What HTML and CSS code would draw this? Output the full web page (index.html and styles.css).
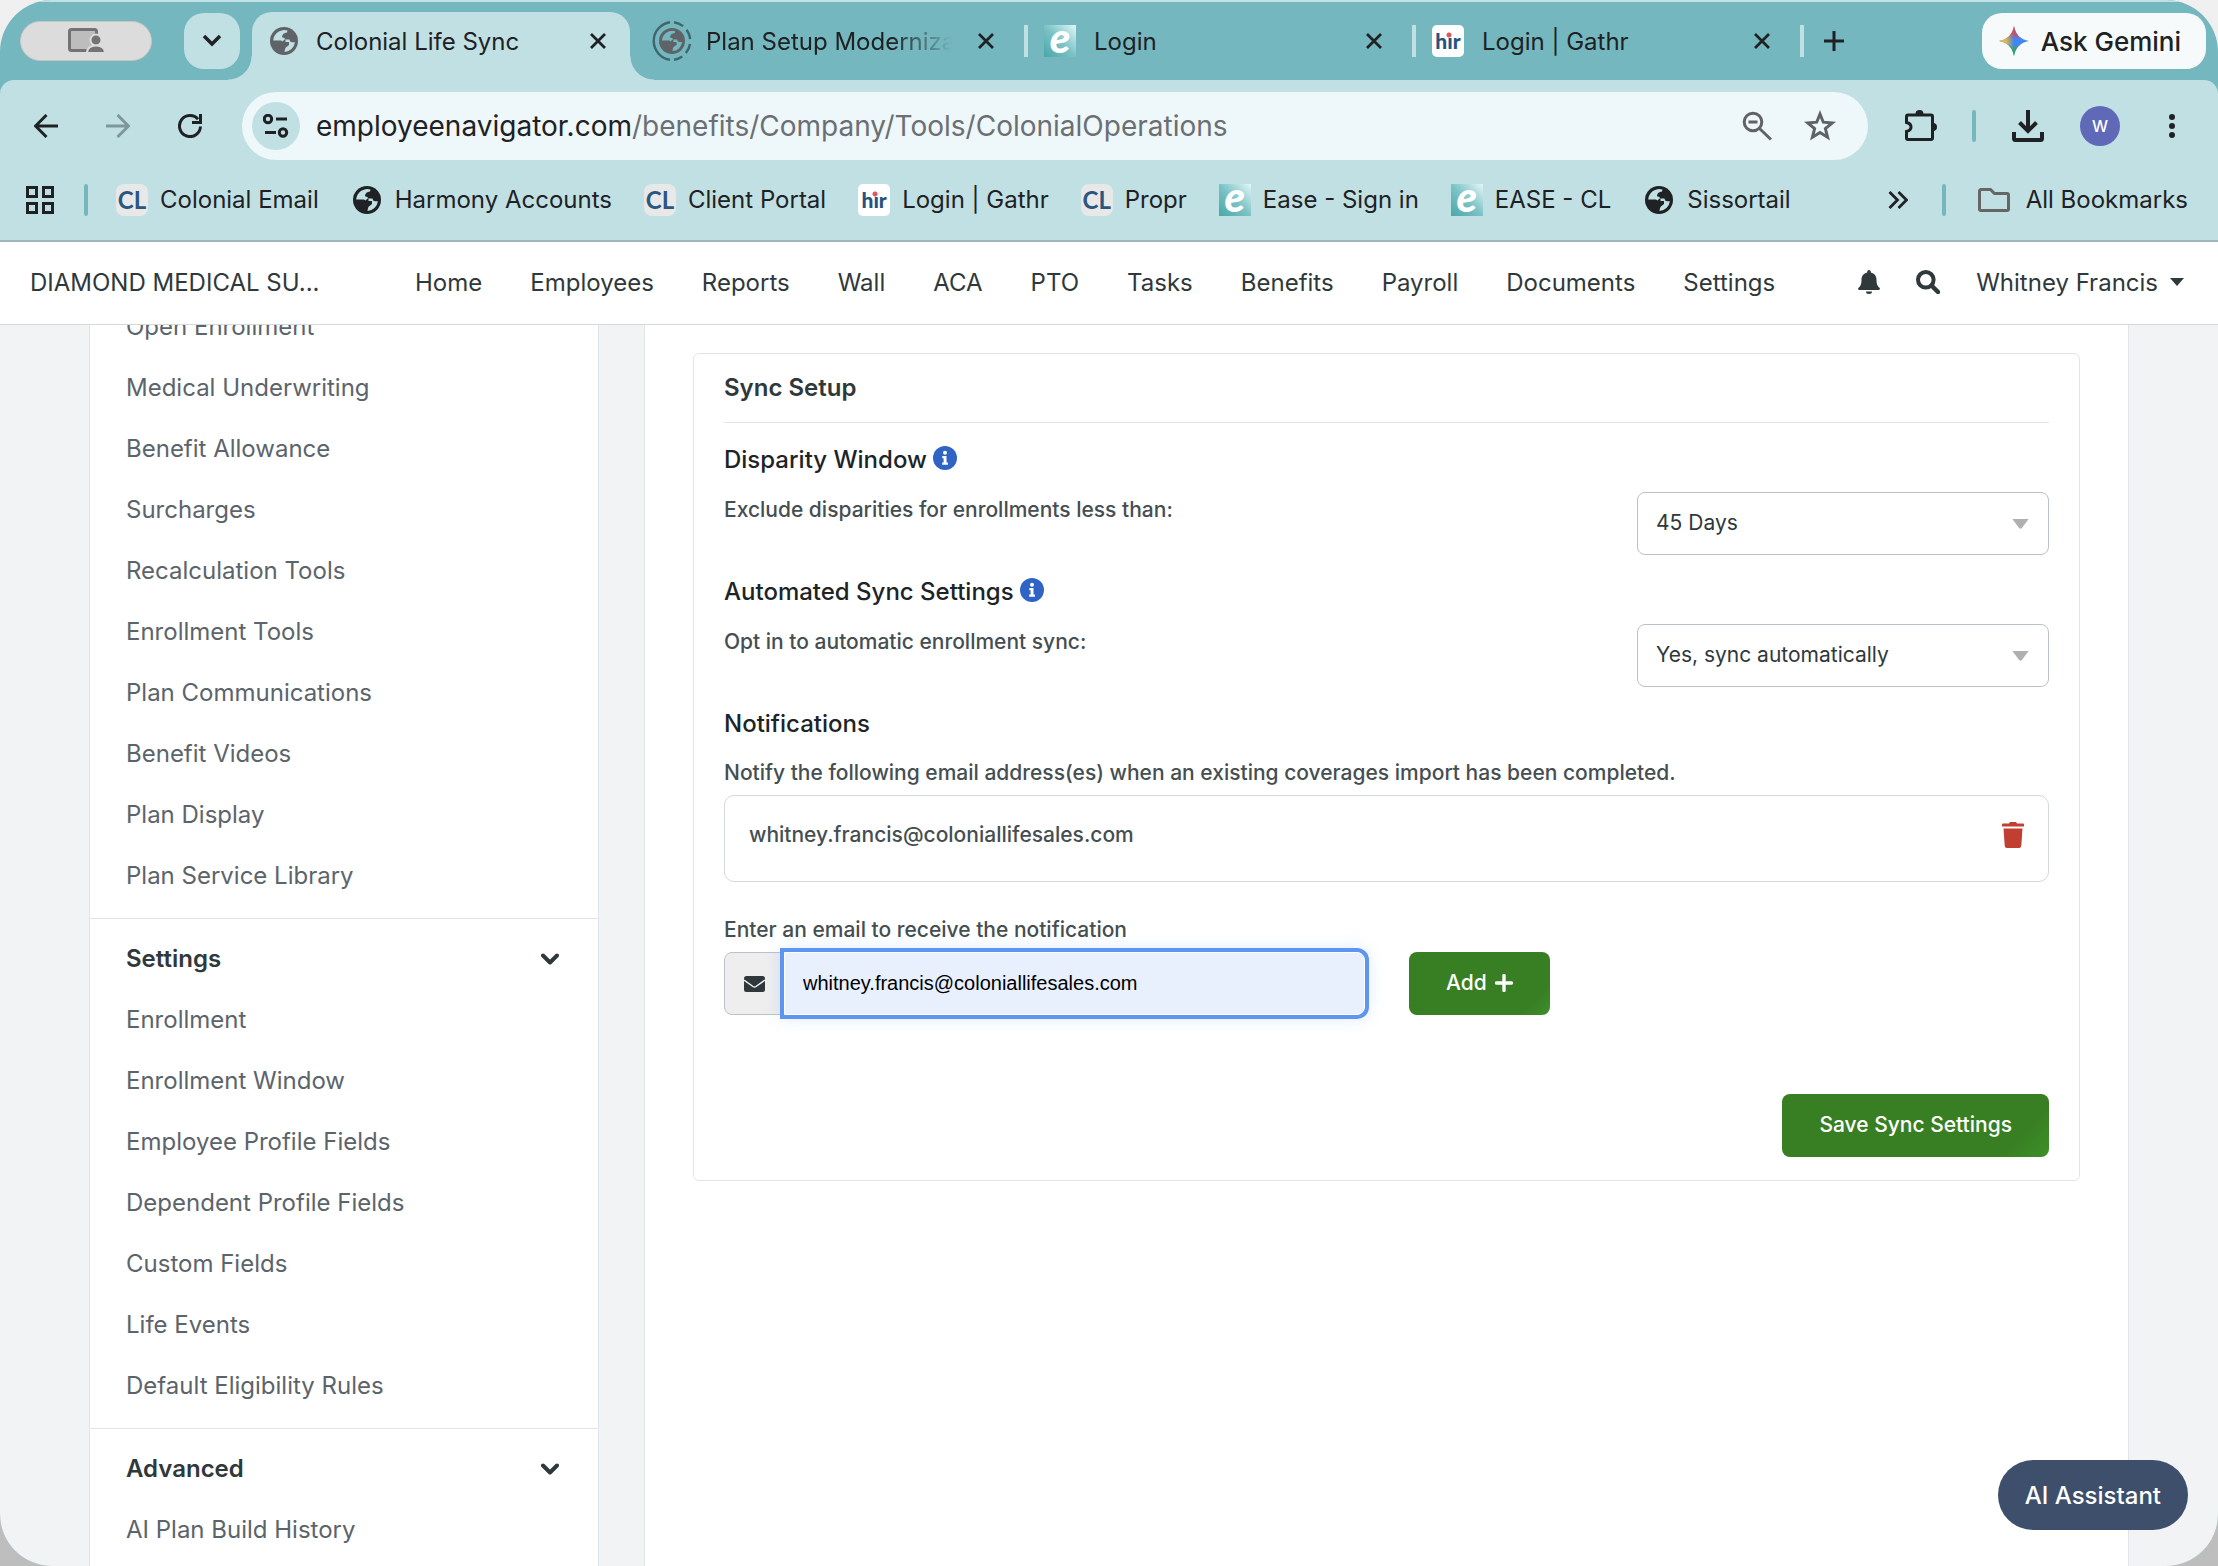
FILE: index.html
```html
<!DOCTYPE html>
<html lang="en">
<head>
    <meta charset="UTF-8">
    <meta name="viewport" content="width=device-width, initial-scale=1.0">
    <title>Colonial Life Sync</title>
    <link rel="stylesheet" href="styles.css">
</head>
<body>
    <svg width="0" height="0" class="sprite" aria-hidden="true">
        <symbol id="globe" viewBox="0 0 28 28">
            <circle cx="14" cy="14" r="14" fill="currentColor"/>
            <path class="sea" d="M3.2 13.5A11 11 0 0 1 17.5 3.6L17 5.5Q12.500 6 12 9.500Q12 11 14 10.800L15.500 12.500V15H19V18L16.500 20Q15 20.500 14.500 24.900A11 11 0 0 0 24.900 15.200H22Q19.500 15 19.500 12.500H14.500L12.500 14.500L11 13.500Z"/>
        </symbol>
        <symbol id="close" viewBox="0 0 16 16">
            <path d="M1 1l14 14M15 1L1 15" fill="none" stroke="currentColor" stroke-width="2.8"/>
        </symbol>
        <symbol id="chevron" viewBox="0 0 18 12">
            <path d="M2 2.500l7 7 7-7" fill="none" stroke="currentColor" stroke-width="4" stroke-linecap="round" stroke-linejoin="round"/>
        </symbol>
        <symbol id="info" viewBox="0 0 24 24">
            <circle cx="12" cy="12" r="12" fill="#2f64c4"/>
            <circle cx="12" cy="6.800" r="2" fill="#fff"/>
            <path d="M9.300 10h4.200v6.500h1.400v2.300H9.200v-2.300h1.400v-4.200H9.300z" fill="#fff"/>
        </symbol>
    </svg>

    <div class="window">
        <!-- Tab strip -->
        <div class="tab-strip">
            <div class="share-pill">
                <svg width="36" height="26" viewBox="0 0 36 26">
                    <rect x="1.500" y="1.500" width="27" height="21" rx="2" fill="#bdbdbd" stroke="#737373" stroke-width="3"/>
                    <circle cx="28" cy="12" r="5.500" fill="#737373" stroke="#dcdcdc" stroke-width="2"/>
                    <path d="M19 25c0-5 4-7.500 9-7.500s9 2.500 9 7.500z" fill="#737373" stroke="#dcdcdc" stroke-width="2"/>
                </svg>
            </div>
            <button class="tab-search" aria-label="Search tabs">
                <svg width="20" height="14" viewBox="0 0 20 14"><path d="M2 2l8 8 8-8" fill="none" stroke="currentColor" stroke-width="3.500"/></svg>
            </button>
            <div class="tabs">
                <div class="tab active">
                    <span class="tab-icon"><svg class="muted" width="28" height="28"><use href="#globe"/></svg></span>
                    <span class="tab-title">Colonial Life Sync</span>
                    <button class="tab-close" aria-label="Close tab"><svg width="16" height="16"><use href="#close"/></svg></button>
                </div>
                <div class="tab loading">
                    <span class="tab-icon">
                        <svg class="muted" width="40" height="40" viewBox="0 0 40 40">
                            <path d="M18 1.200A19 19 0 0 0 18 38.800" fill="none" stroke="#3f666b" stroke-width="2.400"/>
                            <path d="M22 1.200A19 19 0 0 1 22 38.800" fill="none" stroke="#3f666b" stroke-width="2.400" stroke-dasharray="10 5"/>
                            <use href="#globe" x="7" y="7" width="26" height="26"/>
                        </svg>
                    </span>
                    <span class="tab-title fade">Plan Setup Modernization</span>
                    <button class="tab-close" aria-label="Close tab"><svg width="16" height="16"><use href="#close"/></svg></button>
                </div>
                <div class="tab">
                    <span class="tab-icon"><span class="fav ease">e</span></span>
                    <span class="tab-title">Login</span>
                    <button class="tab-close" aria-label="Close tab"><svg width="16" height="16"><use href="#close"/></svg></button>
                </div>
                <div class="tab">
                    <span class="tab-icon"><span class="fav hr">hır</span></span>
                    <span class="tab-title">Login | Gathr</span>
                    <button class="tab-close" aria-label="Close tab"><svg width="16" height="16"><use href="#close"/></svg></button>
                </div>
                <span class="tab-end"></span>
            </div>
            <button class="new-tab" aria-label="New tab">
                <svg width="20" height="20" viewBox="0 0 20 20"><path d="M10 0v20M0 10h20" stroke="currentColor" stroke-width="3"/></svg>
            </button>
            <button class="gemini">
                <svg width="30" height="30" viewBox="0 0 30 30">
                    <defs>
                        <linearGradient id="gemA" x1="0" y1="0" x2="1" y2="0"><stop offset="0" stop-color="#f6c12c"/><stop offset=".25" stop-color="#f6c12c" stop-opacity=".8"/><stop offset=".5" stop-color="#f6c12c" stop-opacity="0"/></linearGradient>
                        <linearGradient id="gemB" x1="0" y1="0" x2="0" y2="1"><stop offset="0" stop-color="#ea4335"/><stop offset=".25" stop-color="#ea4335" stop-opacity=".7"/><stop offset=".45" stop-color="#ea4335" stop-opacity="0"/><stop offset=".6" stop-color="#34a853" stop-opacity="0"/><stop offset=".85" stop-color="#34a853"/></linearGradient>
                    </defs>
                    <path d="M15 0C16.500 8.500 21.500 13.500 30 15C21.500 16.500 16.500 21.500 15 30C13.500 21.500 8.500 16.500 0 15C8.500 13.500 13.500 8.500 15 0Z" fill="#4285f4"/>
                    <path d="M15 0C16.500 8.500 21.500 13.500 30 15C21.500 16.500 16.500 21.500 15 30C13.500 21.500 8.500 16.500 0 15C8.500 13.500 13.500 8.500 15 0Z" fill="url(#gemA)"/>
                    <path d="M15 0C16.500 8.500 21.500 13.500 30 15C21.500 16.500 16.500 21.500 15 30C13.500 21.500 8.500 16.500 0 15C8.500 13.500 13.500 8.500 15 0Z" fill="url(#gemB)"/>
                </svg>
                Ask Gemini
            </button>
        </div>

        <!-- Toolbar -->
        <div class="toolbar-wrap">
            <div class="toolbar">
                <div class="nav-buttons">
                    <button aria-label="Back"><svg width="24" height="24" viewBox="0 0 24 24"><path d="M24 12H2M12.500 1L1.500 12l11 11" fill="none" stroke="currentColor" stroke-width="3"/></svg></button>
                    <button aria-label="Forward" class="disabled"><svg width="24" height="24" viewBox="0 0 24 24"><path d="M0 12h22M11.500 1l11 11-11 11" fill="none" stroke="currentColor" stroke-width="3"/></svg></button>
                    <button aria-label="Reload"><svg width="24" height="24" viewBox="0 0 24 24"><path d="M22.500 12.500A10.500 10.500 0 1 1 20 5.200M22.500 0v8.500H14" fill="none" stroke="currentColor" stroke-width="3"/></svg></button>
                </div>
                <div class="omnibox">
                    <span class="site-info">
                        <svg width="26" height="24" viewBox="0 0 26 24"><g fill="none" stroke="currentColor" stroke-width="3"><circle cx="5" cy="5" r="3.700"/><path d="M13 5h11M2 18.500h11"/><circle cx="20" cy="18.500" r="3.700"/></g></svg>
                    </span>
                    <span class="url">employeenavigator.com<span class="path">/benefits/Company/Tools/ColonialOperations</span></span>
                    <button aria-label="Zoom"><svg width="30" height="30" viewBox="0 0 30 30"><g fill="none" stroke="currentColor" stroke-width="3"><circle cx="11" cy="11" r="8.800"/><path d="M17.500 17.500L29 28.500M6.500 11h9"/></g></svg></button>
                    <button aria-label="Bookmark this tab"><svg width="32" height="32" viewBox="0 0 32 32"><path d="M16 4l3.300 8.200 9 .7-6.900 5.700 2.200 8.700L16 22.500l-7.600 4.800 2.200-8.700-6.900-5.700 9-.7z" fill="none" stroke="currentColor" stroke-width="3"/></svg></button>
                </div>
                <button class="ext" aria-label="Extensions">
                    <svg width="34" height="34" viewBox="0 0 34 34"><path d="M4 6h23a1.500 1.500 0 0 1 1.500 1.500V29a1.500 1.500 0 0 1-1.500 1.500H4A1.500 1.500 0 0 1 2.500 29v-6.500q4.500-1 4.500-4.500t-4.500-4.500v-6A1.500 1.500 0 0 1 4 6z" fill="none" stroke="currentColor" stroke-width="3"/><path d="M11.500 5a4 4 0 0 1 8 0zM29 14a4 4 0 0 1 0 8z" fill="currentColor"/></svg>
                </button>
                <span class="divider"></span>
                <button class="download" aria-label="Downloads">
                    <svg width="32" height="32" viewBox="0 0 32 32"><path d="M16 0v20M7.500 12.500l8.500 8.500 8.500-8.500M2 22v6.500a1.500 1.500 0 0 0 1.500 1.500h25a1.500 1.500 0 0 0 1.500-1.500V22" fill="none" stroke="currentColor" stroke-width="4"/></svg>
                </button>
                <span class="avatar">W</span>
                <button class="more" aria-label="Menu">
                    <svg width="6" height="24" viewBox="0 0 6 24"><g fill="currentColor"><circle cx="3" cy="3" r="3"/><circle cx="3" cy="12" r="3"/><circle cx="3" cy="21" r="3"/></g></svg>
                </button>
            </div>

            <!-- Bookmarks -->
            <div class="bookmarks">
                <button class="apps" aria-label="Apps">
                    <svg width="28" height="28" viewBox="0 0 28 28"><g fill="none" stroke="currentColor" stroke-width="3"><path d="M1.500 1.500h9v9h-9zM17.500 1.500h9v9h-9zM1.500 17.500h9v9h-9zM17.500 17.500h9v9h-9z"/></g></svg>
                </button>
                <span class="divider"></span>
                <div class="bookmark-list">
                    <a href="#"><span class="fav cl">CL</span>Colonial Email</a>
                    <a href="#"><span class="fav"><svg width="28" height="28"><use href="#globe"/></svg></span>Harmony Accounts</a>
                    <a href="#"><span class="fav cl">CL</span>Client Portal</a>
                    <a href="#"><span class="fav hr">hır</span>Login | Gathr</a>
                    <a href="#"><span class="fav cl">CL</span>Propr</a>
                    <a href="#"><span class="fav ease">e</span>Ease - Sign in</a>
                    <a href="#"><span class="fav ease">e</span>EASE - CL</a>
                    <a href="#"><span class="fav"><svg width="28" height="28"><use href="#globe"/></svg></span>Sissortail</a>
                </div>
                <button class="overflow" aria-label="More bookmarks">
                    <svg width="20" height="18" viewBox="0 0 20 18"><path d="M1.500 1l8 8-8 8M10.500 1l8 8-8 8" fill="none" stroke="currentColor" stroke-width="2.800"/></svg>
                </button>
                <span class="divider"></span>
                <a href="#" class="all-bookmarks">
                    <svg width="32" height="24" viewBox="0 0 32 24"><path d="M3 1.500h9.500l4 4H29a1.500 1.500 0 0 1 1.500 1.500v14a1.500 1.500 0 0 1-1.500 1.500H3A1.500 1.500 0 0 1 1.500 21V3A1.500 1.500 0 0 1 3 1.500z" fill="none" stroke="#666" stroke-width="3"/></svg>
                    All Bookmarks
                </a>
            </div>
        </div>

        <!-- Site header -->
        <header class="site-header">
            <a href="#" class="company">DIAMOND MEDICAL SU...</a>
            <nav class="main-nav">
                <a href="#">Home</a>
                <a href="#">Employees</a>
                <a href="#">Reports</a>
                <a href="#">Wall</a>
                <a href="#">ACA</a>
                <a href="#">PTO</a>
                <a href="#">Tasks</a>
                <a href="#">Benefits</a>
                <a href="#">Payroll</a>
                <a href="#">Documents</a>
                <a href="#">Settings</a>
            </nav>
            <div class="header-tools">
                <button aria-label="Notifications"><svg width="22" height="24" viewBox="0 0 22 24"><path d="M11 0a1.800 1.800 0 0 1 1.800 1.800v.6C16.500 3.300 18.500 6 18.500 9.500c0 5 1 6.500 3 8.300.8.800.4 2.200-.8 2.200H1.300C.1 20-.3 18.600.5 17.800c2-1.800 3-3.300 3-8.300C3.500 6 5.500 3.300 9.200 2.400v-.6A1.800 1.800 0 0 1 11 0zM8 21.500h6a3 2.500 0 0 1-6 0z" fill="currentColor"/></svg></button>
                <button aria-label="Search"><svg width="24" height="24" viewBox="0 0 24 24"><circle cx="9.800" cy="9.800" r="7.800" fill="none" stroke="currentColor" stroke-width="4"/><path d="M15.500 15.500l6.500 6.500" stroke="currentColor" stroke-width="4.500" stroke-linecap="round"/></svg></button>
                <button class="user">Whitney Francis <svg width="14" height="8" viewBox="0 0 14 8"><path d="M0 0h14L7 8z" fill="currentColor"/></svg></button>
            </div>
        </header>

        <!-- Page -->
        <div class="page">
            <aside class="sidebar">
                <section class="group scrolled">
                    <a href="#">Open Enrollment</a>
                    <a href="#">Medical Underwriting</a>
                    <a href="#">Benefit Allowance</a>
                    <a href="#">Surcharges</a>
                    <a href="#">Recalculation Tools</a>
                    <a href="#">Enrollment Tools</a>
                    <a href="#">Plan Communications</a>
                    <a href="#">Benefit Videos</a>
                    <a href="#">Plan Display</a>
                    <a href="#">Plan Service Library</a>
                </section>
                <section class="group">
                    <button class="group-title">Settings <svg width="18" height="12"><use href="#chevron"/></svg></button>
                    <a href="#">Enrollment</a>
                    <a href="#">Enrollment Window</a>
                    <a href="#">Employee Profile Fields</a>
                    <a href="#">Dependent Profile Fields</a>
                    <a href="#">Custom Fields</a>
                    <a href="#">Life Events</a>
                    <a href="#">Default Eligibility Rules</a>
                </section>
                <section class="group">
                    <button class="group-title">Advanced <svg width="18" height="12"><use href="#chevron"/></svg></button>
                    <a href="#">AI Plan Build History</a>
                </section>
            </aside>

            <main class="content">
                <form class="card">
                    <h2>Sync Setup</h2>

                    <h3>Disparity Window <svg width="24" height="24"><use href="#info"/></svg></h3>
                    <div class="setting">
                        <label for="disparity">Exclude disparities for enrollments less than:</label>
                        <div class="select">
                            <select id="disparity"><option>45 Days</option></select>
                            <svg width="17" height="10" viewBox="0 0 18 11"><path d="M0 0h18l-7.500 10q-1.500 1.500-3 0z" fill="#b0b0b0"/></svg>
                        </div>
                    </div>

                    <h3>Automated Sync Settings <svg width="24" height="24"><use href="#info"/></svg></h3>
                    <div class="setting">
                        <label for="autosync">Opt in to automatic enrollment sync:</label>
                        <div class="select">
                            <select id="autosync"><option>Yes, sync automatically</option></select>
                            <svg width="17" height="10" viewBox="0 0 18 11"><path d="M0 0h18l-7.500 10q-1.500 1.500-3 0z" fill="#b0b0b0"/></svg>
                        </div>
                    </div>

                    <h3>Notifications</h3>
                    <p class="text">Notify the following email address(es) when an existing coverages import has been completed.</p>
                    <div class="email-row">
                        <span>whitney.francis@coloniallifesales.com</span>
                        <button type="button" aria-label="Delete">
                            <svg width="22" height="26" viewBox="0 0 22 26"><path d="M0 2.500Q0 1.500 1 1.500h6L8 0h6l1 1.500h6q1 0 1 1v2H0zM1.500 6.500h19l-1.200 17.300q-.2 2.200-2.300 2.200H5q-2.100 0-2.300-2.200z" fill="#c13f31"/></svg>
                        </button>
                    </div>

                    <label class="text" for="email">Enter an email to receive the notification</label>
                    <div class="add-row">
                        <div class="input-group">
                            <span class="addon">
                                <svg width="21" height="16" viewBox="0 0 21 16"><rect width="21" height="16" rx="2.500" fill="#2f383b"/><path d="M0 4l9 6.500q1.500 1 3 0L21 4" fill="none" stroke="#eee" stroke-width="1.500"/></svg>
                            </span>
                            <input id="email" type="text" value="whitney.francis@coloniallifesales.com">
                        </div>
                        <button type="button" class="btn">Add <svg width="18" height="18" viewBox="0 0 18 18"><path d="M9 1.500v15M1.500 9h15" stroke="#fff" stroke-width="3.400" stroke-linecap="round"/></svg></button>
                    </div>

                    <div class="actions">
                        <button type="button" class="btn">Save Sync Settings</button>
                    </div>
                </form>
            </main>
            <button class="assistant">AI Assistant</button>
        </div>
    </div>
</body>
</html>
```
FILE: styles.css
```css
/* General Styles */
* {
    box-sizing: border-box;
}
body {
    margin: 0;
    background: linear-gradient(#f0f0f0, #bdbdbd);
    font-family: Inter, 'Liberation Sans', sans-serif;
    font-size: 24px;
    color: #2f383b;
}
a {
    color: inherit;
    text-decoration: none;
}
button {
    display: flex;
    align-items: center;
    justify-content: center;
    padding: 0;
    border: none;
    background: none;
    font: inherit;
    color: inherit;
    cursor: pointer;
}
svg {
    display: block;
    flex: none;
}
.sprite {
    position: absolute;
}
.window {
    display: flex;
    flex-direction: column;
    height: 100vh;
    overflow: hidden;
    border-radius: 52px;
    background: #74b7bf;
}

/* Tab strip */
.tab-strip {
    display: flex;
    align-items: center;
    height: 80px;
    padding: 0 12px 0 20px;
    border-top: 2px solid #c1e0e3;
    color: #202124;
}
.share-pill {
    display: flex;
    align-items: center;
    justify-content: center;
    width: 132px;
    height: 40px;
    margin-right: 32px;
    border: 1px solid #c6c6c6;
    border-radius: 20px;
    background: #dcdcdc;
}
.tab-search {
    width: 56px;
    height: 56px;
    margin-right: 8px;
    border-radius: 20px;
    background: #c1e0e3;
}
.tabs {
    display: flex;
    align-self: stretch;
}
.tab {
    display: flex;
    align-items: center;
    width: 388px;
    padding: 0 28px 0 16px;
}
.tab-icon {
    display: flex;
    justify-content: center;
    width: 40px;
    margin-right: 14px;
}
.tab-title {
    flex: 1;
    overflow: hidden;
    white-space: nowrap;
}
.tab-title.fade {
    margin-right: 24px;
    -webkit-mask-image: linear-gradient(to right, #000 75%, transparent);
    mask-image: linear-gradient(to right, #000 75%, transparent);
}
.tab-close {
    width: 20px;
    height: 20px;
}
.tab + .tab + .tab,
.tab-end {
    background: linear-gradient(#c1e0e3, #c1e0e3) left center / 4px 32px no-repeat;
}
.tab-end {
    width: 4px;
}
.loading {
    --sea: #74b7bf;
}
.tab.active {
    position: relative;
    width: 378px;
    margin: 10px 6px 0 4px;
    padding: 0 22px 10px 12px;
    border-radius: 20px 20px 0 0;
    background: #c1e0e3;
}
.active .tab-icon {
    margin-right: 12px;
}
/* outward curves at the foot of the active tab */
.tab.active::before,
.tab.active::after {
    content: "";
    position: absolute;
    bottom: 0;
    width: 24px;
    height: 24px;
}
.tab.active::before {
    right: 100%;
    background: radial-gradient(circle at 0 0, transparent 23px, #c1e0e3 24px);
}
.tab.active::after {
    left: 100%;
    background: radial-gradient(circle at 100% 0, transparent 23px, #c1e0e3 24px);
}
.new-tab {
    width: 20px;
    height: 20px;
    margin-left: 20px;
}
.gemini {
    gap: 12px;
    height: 56px;
    margin-left: auto;
    padding: 0 25px 0 17px;
    border-radius: 20px;
    background: #f6fafb;
    font-weight: 500;
    font-size: 26px;
}

/* Icons */
.sea {
    fill: var(--sea, #c1e0e3);
}
.muted {
    color: #5f6368;
}
.fav {
    display: flex;
    align-items: center;
    justify-content: center;
    width: 32px;
    height: 32px;
    line-height: 32px;
}
.fav.cl {
    border-radius: 8px;
    background: #e8e8e8;
    color: #2b5680;
    font-family: Lato, sans-serif;
    font-weight: 700;
    font-size: 24px;
}
.fav.ease {
    padding-bottom: 8px;
    background: linear-gradient(45deg, #4ba6a6, #7cc3c6 50%, #e3f7f8);
    color: #fff;
    font-family: Lato, sans-serif;
    font-style: italic;
    font-weight: 900;
    font-size: 42px;
    line-height: 24px;
}
.fav.hr {
    border-radius: 5px;
    background: radial-gradient(circle at 17px 10px, #e0555c 2px, transparent 3px) #fff;
    color: #27527f;
    font-family: Lato, sans-serif;
    font-weight: 900;
    font-size: 21px;
}

/* Toolbar */
.toolbar-wrap {
    border-bottom: 2px solid #9fb5ba;
    border-radius: 14px 14px 0 0;
    background: #c1e0e3;
    color: #202124;
}
.toolbar {
    display: flex;
    align-items: center;
    height: 92px;
    padding: 0 43px 0 34px;
}
.nav-buttons {
    display: flex;
    gap: 48px;
    margin-right: 40px;
}
.disabled {
    color: #7f979b;
}
.omnibox {
    display: flex;
    flex: 1;
    align-items: center;
    height: 68px;
    padding: 0 32px 0 10px;
    border-radius: 34px;
    background: #eef7f9;
    font-size: 28px;
}
.omnibox button {
    margin-left: 32px;
    color: #5f6368;
}
.site-info {
    display: flex;
    align-items: center;
    justify-content: center;
    width: 48px;
    height: 48px;
    margin-right: 16px;
    border-radius: 50%;
    background: #c1e0e3;
}
.url {
    flex: 1;
    white-space: nowrap;
}
.path {
    color: #6b6f73;
}
.ext {
    margin: 0 34px 0 36px;
}
.divider {
    width: 4px;
    height: 32px;
    border-radius: 2px;
    background: #74b7bf;
}
.download {
    margin: 0 36px;
}
.avatar {
    width: 40px;
    height: 40px;
    border-radius: 50%;
    background: #5f69b8;
    color: #fff;
    font-size: 16px;
    font-weight: 500;
    line-height: 40px;
    text-align: center;
}
.more {
    margin-left: 49px;
}

/* Bookmarks */
.bookmarks {
    display: flex;
    align-items: center;
    height: 68px;
    padding: 0 30px 13px 26px;
    white-space: nowrap;
}
.apps {
    margin-right: 30px;
}
.bookmark-list {
    display: flex;
    flex: 1;
    gap: 32px;
    margin-left: 28px;
}
.bookmark-list a {
    display: flex;
    align-items: center;
    gap: 12px;
}
.overflow {
    margin-right: 34px;
}
.all-bookmarks {
    display: flex;
    align-items: center;
    gap: 16px;
    margin-left: 32px;
}

/* Site header */
.site-header {
    display: flex;
    align-items: center;
    height: 83px;
    padding: 0 34px 2px 30px;
    border-bottom: 1px solid #d3d9de;
    background: #fff;
    white-space: nowrap;
}
.company {
    width: 385px;
}
.main-nav {
    display: flex;
    gap: 48px;
}
.header-tools {
    display: flex;
    align-items: center;
    gap: 36px;
    margin-left: auto;
}
.user {
    gap: 12px;
}

/* Page */
.page {
    position: relative;
    display: flex;
    flex: 1;
    gap: 45px;
    min-height: 0;
    padding: 0 89px;
    background: #f1f3f5;
}
.sidebar {
    flex: none;
    width: 510px;
    overflow: hidden;
    border: solid #e1e5e9;
    border-width: 0 1px;
    background: #fff;
    color: #5c646b;
}
.group {
    padding: 9px 39px 12px 36px;
    border-bottom: 1px solid #e1e5e9;
}
.group.scrolled {
    margin-top: -38px;
}
.group a {
    display: block;
    line-height: 61px;
}
.group-title {
    justify-content: space-between;
    width: 100%;
    color: #2f383b;
    font-weight: 600;
    line-height: 61px;
}
.content {
    flex: 1;
    padding: 28px 48px;
    border: solid #e1e5e9;
    border-width: 0 1px;
    background: #fff;
}

/* Card */
.card {
    padding: 0 30px 23px;
    border: 1px solid #e1e5e9;
    border-radius: 6px;
    font-size: 21px;
}
.card h2 {
    margin: 0 0 18px;
    border-bottom: 1px solid #e1e5e9;
    font-size: 24px;
    font-weight: 600;
    line-height: 68px;
}
.card h3 {
    display: flex;
    gap: 6px;
    margin: 0 0 13px;
    color: #1c2427;
    font-size: 24px;
    font-weight: 500;
    line-height: 38px;
}
.card h3 svg {
    margin-top: 5px;
}
.text,
.setting label {
    color: #454e51;
    font-weight: 500;
    line-height: 34px;
}
.setting {
    display: flex;
    justify-content: space-between;
    margin-bottom: 18px;
}
.setting label {
    line-height: 36px;
}
.select {
    position: relative;
    width: 412px;
}
.select svg {
    position: absolute;
    top: 27px;
    right: 20px;
    pointer-events: none;
}
select {
    appearance: none;
    width: 100%;
    height: 63px;
    padding: 0 18px 2px;
    border: 1px solid #b9c2ca;
    border-radius: 8px;
    background: #fff;
    color: #2f383b;
    font: inherit;
}
p.text {
    margin: 0 0 5px;
}
.email-row {
    display: flex;
    align-items: center;
    justify-content: space-between;
    height: 87px;
    margin-bottom: 31px;
    padding: 0 24px 8px;
    border: 1px solid #d3d9de;
    border-radius: 10px;
    color: #454e51;
    font-weight: 500;
}
.add-row {
    display: flex;
    gap: 44px;
    margin-top: 5px;
}
.input-group {
    display: flex;
    width: 641px;
}
.addon {
    display: flex;
    align-items: center;
    justify-content: center;
    width: 60px;
    border: 1px solid #b9c2ca;
    border-radius: 8px 0 0 8px;
    background: #eee;
}
.input-group input {
    flex: 1;
    min-width: 0;
    height: 63px;
    padding: 0 18px;
    border: 1px solid #fff;
    border-radius: 0 8px 8px 0;
    outline: none;
    background: #e8effd;
    box-shadow: 0 0 0 4px #5e95f0, 0 0 16px 4px rgba(94, 149, 240, 0.2);
    color: #000;
    font-family: 'Liberation Sans', Arial, sans-serif;
    font-size: 20px;
}
.btn {
    gap: 8px;
    height: 63px;
    padding: 0 37px 2px;
    border-radius: 8px;
    background: linear-gradient(135deg, #387f24 85%, #3e8f29);
    color: #fff;
    font-weight: 500;
}
.actions {
    display: flex;
    justify-content: flex-end;
    margin-top: 79px;
}
.assistant {
    position: absolute;
    right: 30px;
    bottom: 36px;
    height: 70px;
    padding: 0 27px;
    border-radius: 35px;
    background: #3d4f6b;
    color: #fff;
    font-weight: 500;
}
```
